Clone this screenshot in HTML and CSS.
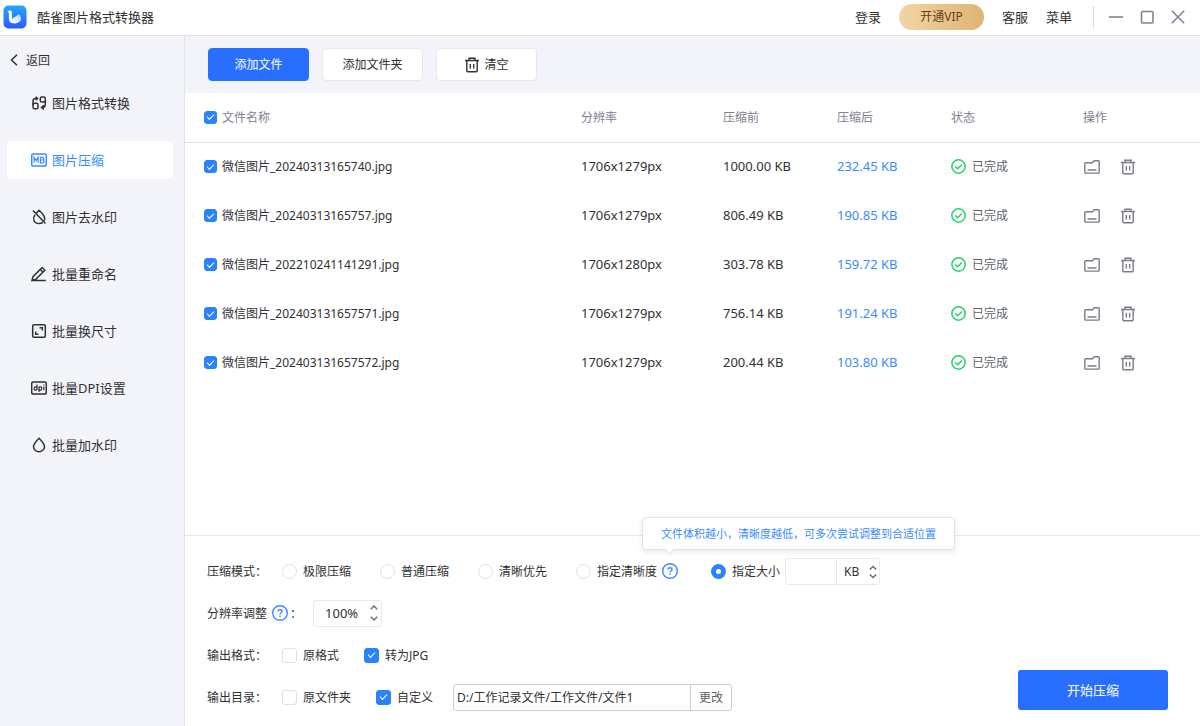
FILE: index.html
```
<!DOCTYPE html>
<html lang="zh-CN">
<head>
    <meta charset="UTF-8">
    <meta name="viewport" content="width=device-width, initial-scale=1.0">
    <title>酷雀图片格式转换器</title>
    <link rel="stylesheet" href="styles.css">
</head>
<body>

<!-- 图标 -->
<svg class="sprite" aria-hidden="true">
    <symbol id="icon-trash" viewBox="0 0 16 16">
        <path d="M1 3.5h14M5 3.2V1.2h6v2M2.800 3.500v10.300q0 1 1 1h8.400q1 0 1-1V3.500M6.300 7v4.600M9.700 7v4.600"/>
    </symbol>
    <symbol id="icon-folder" viewBox="0 0 16 16">
        <path d="M.8 13.300V4.600q0-.8.8-.8h6.800l1.800-2h4.200q.8 0 .8.800v10.700q0 .8-.8.800H1.600q-.8 0-.8-.8zM3.500 11h9"/>
    </symbol>
    <symbol id="icon-done" viewBox="0 0 14 14">
        <circle cx="7" cy="7" r="6.2"/>
        <path d="M4 7l2.2 2.1L10.1 5.2"/>
    </symbol>
    <symbol id="icon-help" viewBox="0 0 16 16">
        <circle cx="8" cy="8" r="7.3"/>
        <path d="M6 6.6Q6 4.700 8 4.700t2 1.700q0 1-1 1.600t-1 1.500M8 10.600v1.300"/>
    </symbol>
    <symbol id="icon-up" viewBox="0 0 8 5">
        <path d="M.8 4.2L4 1l3.2 3.2"/>
    </symbol>
    <symbol id="icon-down" viewBox="0 0 8 5">
        <path d="M.8.8L4 4 7.2.8"/>
    </symbol>
    <symbol id="icon-updown" viewBox="0 0 8 14">
        <path d="M.8 4.600L4 1.400l3.200 3.200M.8 9.400L4 12.600l3.200-3.200"/>
    </symbol>
</svg>

<header class="titlebar">
    <svg class="logo" viewBox="0 0 24 24" aria-hidden="true">
        <defs>
            <linearGradient id="logoBg" x1="0" y1="0" x2="0" y2="1">
                <stop offset="0" stop-color="#22a7ff"/>
                <stop offset="1" stop-color="#2b5cff"/>
            </linearGradient>
            <linearGradient id="logoWing" x1="0" y1="1" x2="1" y2="0">
                <stop offset="0" stop-color="#fff"/>
                <stop offset="1" stop-color="#b5d4ff"/>
            </linearGradient>
        </defs>
        <rect x="0.5" y="0.5" width="23" height="23" rx="5" fill="url(#logoBg)"/>
        <path d="M4.6 6.7C5.4 5 8.700 4.700 8.900 7.500V12c0 2.500 1.300 4 3.600 6.200C8 18.800 5.700 16.500 5.900 12.500V8z" fill="#fff"/>
        <path d="M9.300 14.500c.8-3.200 4.700-2.700 6.200-5.300 3.500 1.300 4.300 8.800-3.800 9.200-1.700-.7-2.700-2.100-2.400-3.900z" fill="url(#logoWing)"/>
    </svg>
    <h1>酷雀图片格式转换器</h1>
    <nav class="account">
        <a href="#">登录</a>
        <button type="button" class="vip">开通VIP</button>
        <a href="#">客服</a>
        <a href="#">菜单</a>
    </nav>
    <div class="window-controls">
        <button type="button" aria-label="最小化"><svg viewBox="0 0 16 16"><path d="M1 8h14"/></svg></button>
        <button type="button" aria-label="最大化"><svg viewBox="0 0 16 16"><rect x="2.500" y="2.500" width="11.500" height="11.500" rx="1"/></svg></button>
        <button type="button" aria-label="关闭"><svg viewBox="0 0 16 16"><path d="M1.800 1.800l12.400 12.400M14.200 1.800L1.800 14.200"/></svg></button>
    </div>
</header>

<div class="layout">
    <aside class="sidebar">
        <a class="back" href="#">
            <svg viewBox="0 0 8 12" aria-hidden="true"><path d="M7 .8L1.500 6 7 11.200"/></svg>
            返回
        </a>
        <nav class="menu">
            <a href="#">
                <svg viewBox="0 0 16 16" aria-hidden="true"><rect x="2" y="8.200" width="5" height="5.600" rx="1.600"/><rect x="9.300" y="2" width="5" height="5" rx="1.600"/><path d="M2 10V6.200Q2 3.500 4.500 3.500H6.200M4.800 1.700L6.600 3.500 4.800 5.300M14.300 5.500v3.700q0 3-2.600 3.500M12.800 10.300l-2.300 2.200 2.300 2"/></svg>
                图片格式转换
            </a>
            <a href="#" class="active">
                <svg viewBox="0 0 16 16" aria-hidden="true"><rect x=".7" y="1.900" width="14.600" height="12.200" rx="1.500"/><path class="thin" d="M3.100 10.800V5.400l2 3.200 2-3.200v5.400M9.400 10.800V5.300h1.900q1.500 0 1.500 1.300T11.300 8H9.400h2.100q1.600 0 1.600 1.400t-1.600 1.400z"/></svg>
                图片压缩
            </a>
            <a href="#">
                <svg viewBox="0 0 16 16" aria-hidden="true"><path d="M5.500 4L8 1.300C11.500 4.500 13.700 7 13.700 9.500q0 1.200-.5 2.300M4 5.700C1.500 9 2.300 14.600 8 14.600q2.300 0 3.800-1.200M2 1.500l12.500 13"/></svg>
                图片去水印
            </a>
            <a href="#">
                <svg viewBox="0 0 16 16" aria-hidden="true"><path d="M1 14.500l1-3.800L11.200 1.500l2.700 2.700L4.500 13.600zM9.300 3.500l2.600 2.600M1 14.600h13.800"/></svg>
                批量重命名
            </a>
            <a href="#">
                <svg viewBox="0 0 16 16" aria-hidden="true"><rect x="1.700" y="1.700" width="12.600" height="12.600" rx="1.300"/><path d="M8.500 4.700h2.800v2.800M7.500 11.300H4.700V8.500"/></svg>
                批量换尺寸
            </a>
            <a href="#">
                <svg viewBox="0 0 16 16" aria-hidden="true"><rect x=".7" y="1.900" width="14.600" height="12.200" rx="1.500"/><path class="thin" d="M6 4.500v5.800M6 8.500q0 1.700-1.400 1.700T3.200 8.500t1.400-1.700T6 8.500M8 6.500V12M8 8.500q0-1.700 1.400-1.700t1.400 1.700-1.400 1.700T8 8.500M12.800 6.600v3.700M12.800 4.500v.9"/></svg>
                批量DPI设置
            </a>
            <a href="#">
                <svg viewBox="0 0 16 16" aria-hidden="true"><path d="M8 1.300C4.500 4.800 2.500 7.200 2.500 9.800 2.500 12.500 5 14.700 8 14.700s5.500-2.200 5.500-4.900C13.500 7.200 11.500 4.800 8 1.300z"/></svg>
                批量加水印
            </a>
        </nav>
    </aside>

    <main class="content">
        <div class="toolbar">
            <button type="button" class="primary">添加文件</button>
            <button type="button">添加文件夹</button>
            <button type="button"><svg class="icon" aria-hidden="true"><use href="#icon-trash"/></svg>清空</button>
        </div>

        <div class="files">
            <table>
                <colgroup>
                    <col>
                    <col class="col-size">
                    <col class="col-kb">
                    <col class="col-kb">
                    <col class="col-status">
                    <col class="col-action">
                </colgroup>
                <thead>
                    <tr>
                        <th><label class="pick"><input type="checkbox" checked>文件名称</label></th>
                        <th>分辨率</th>
                        <th>压缩前</th>
                        <th>压缩后</th>
                        <th>状态</th>
                        <th>操作</th>
                    </tr>
                </thead>
                <tbody>
                    <tr>
                        <td><label class="pick"><input type="checkbox" checked>微信图片_20240313165740.jpg</label></td>
                        <td class="num">1706x1279px</td>
                        <td class="num">1000.00 KB</td>
                        <td class="num after">232.45 KB</td>
                        <td><span class="status"><svg aria-hidden="true"><use href="#icon-done"/></svg>已完成</span></td>
                        <td><div class="actions">
                            <button type="button" aria-label="打开文件夹"><svg><use href="#icon-folder"/></svg></button>
                            <button type="button" aria-label="删除"><svg><use href="#icon-trash"/></svg></button>
                        </div></td>
                    </tr>
                    <tr>
                        <td><label class="pick"><input type="checkbox" checked>微信图片_20240313165757.jpg</label></td>
                        <td class="num">1706x1279px</td>
                        <td class="num">806.49 KB</td>
                        <td class="num after">190.85 KB</td>
                        <td><span class="status"><svg aria-hidden="true"><use href="#icon-done"/></svg>已完成</span></td>
                        <td><div class="actions">
                            <button type="button" aria-label="打开文件夹"><svg><use href="#icon-folder"/></svg></button>
                            <button type="button" aria-label="删除"><svg><use href="#icon-trash"/></svg></button>
                        </div></td>
                    </tr>
                    <tr>
                        <td><label class="pick"><input type="checkbox" checked>微信图片_202210241141291.jpg</label></td>
                        <td class="num">1706x1280px</td>
                        <td class="num">303.78 KB</td>
                        <td class="num after">159.72 KB</td>
                        <td><span class="status"><svg aria-hidden="true"><use href="#icon-done"/></svg>已完成</span></td>
                        <td><div class="actions">
                            <button type="button" aria-label="打开文件夹"><svg><use href="#icon-folder"/></svg></button>
                            <button type="button" aria-label="删除"><svg><use href="#icon-trash"/></svg></button>
                        </div></td>
                    </tr>
                    <tr>
                        <td><label class="pick"><input type="checkbox" checked>微信图片_202403131657571.jpg</label></td>
                        <td class="num">1706x1279px</td>
                        <td class="num">756.14 KB</td>
                        <td class="num after">191.24 KB</td>
                        <td><span class="status"><svg aria-hidden="true"><use href="#icon-done"/></svg>已完成</span></td>
                        <td><div class="actions">
                            <button type="button" aria-label="打开文件夹"><svg><use href="#icon-folder"/></svg></button>
                            <button type="button" aria-label="删除"><svg><use href="#icon-trash"/></svg></button>
                        </div></td>
                    </tr>
                    <tr>
                        <td><label class="pick"><input type="checkbox" checked>微信图片_202403131657572.jpg</label></td>
                        <td class="num">1706x1279px</td>
                        <td class="num">200.44 KB</td>
                        <td class="num after">103.80 KB</td>
                        <td><span class="status"><svg aria-hidden="true"><use href="#icon-done"/></svg>已完成</span></td>
                        <td><div class="actions">
                            <button type="button" aria-label="打开文件夹"><svg><use href="#icon-folder"/></svg></button>
                            <button type="button" aria-label="删除"><svg><use href="#icon-trash"/></svg></button>
                        </div></td>
                    </tr>
                </tbody>
            </table>
        </div>

        <form class="settings">
            <div class="fields">
                <div class="field">
                    <span class="name">压缩模式：</span>
                    <div class="modes">
                        <label class="option"><input type="radio" name="mode">极限压缩</label>
                        <label class="option"><input type="radio" name="mode">普通压缩</label>
                        <label class="option"><input type="radio" name="mode">清晰优先</label>
                        <div class="with-help">
                            <label class="option"><input type="radio" name="mode">指定清晰度</label>
                            <span class="help">
                                <svg aria-hidden="true"><use href="#icon-help"/></svg>
                                <span class="tooltip" role="tooltip">文件体积越小，清晰度越低，可多次尝试调整到合适位置</span>
                            </span>
                        </div>
                        <div class="target">
                            <label class="option"><input type="radio" name="mode" checked>指定大小</label>
                            <div class="box">
                                <input type="text" class="amount" aria-label="大小">
                                <div class="unit">
                                    <select aria-label="单位">
                                        <option>KB</option>
                                        <option>MB</option>
                                    </select>
                                    <svg aria-hidden="true"><use href="#icon-updown"/></svg>
                                </div>
                            </div>
                        </div>
                    </div>
                </div>
                <div class="field">
                    <label class="name" for="scale">分辨率调整<span class="help"><svg aria-hidden="true"><use href="#icon-help"/></svg></span>：</label>
                    <div class="box stepper">
                        <input type="text" id="scale" value="100%">
                        <div class="steps">
                            <button type="button" aria-label="增加"><svg><use href="#icon-up"/></svg></button>
                            <button type="button" aria-label="减少"><svg><use href="#icon-down"/></svg></button>
                        </div>
                    </div>
                </div>
                <div class="field">
                    <span class="name">输出格式：</span>
                    <div class="checks">
                        <label class="option"><input type="checkbox">原格式</label>
                        <label class="option"><input type="checkbox" checked>转为JPG</label>
                    </div>
                </div>
                <div class="field">
                    <span class="name">输出目录：</span>
                    <div class="checks">
                        <label class="option"><input type="checkbox">原文件夹</label>
                        <label class="option"><input type="checkbox" checked>自定义</label>
                    </div>
                    <div class="box path">
                        <input type="text" aria-label="输出目录" value="D:/工作记录文件/工作文件/文件1">
                        <button type="button">更改</button>
                    </div>
                </div>
            </div>
            <button type="submit" class="start">开始压缩</button>
        </form>
    </main>
</div>

</body>
</html>
```
FILE: styles.css
```
/* Global styling */
* {
    box-sizing: border-box;
}

body {
    display: flex;
    flex-direction: column;
    min-height: 100vh;
    margin: 0;
    font-family: "Noto Sans", "Noto Sans CJK SC", sans-serif;
    font-size: 12px;
    line-height: 19px;
    color: #303133;
    background-color: #fff;
}

a {
    color: inherit;
    text-decoration: none;
}

button, input, select {
    margin: 0;
    padding: 0;
    border: none;
    background: none;
    font: inherit;
    color: inherit;
}

button {
    cursor: pointer;
}

svg {
    display: block;
    flex: none;
    fill: none;
    stroke: currentColor;
    stroke-width: 1.4;
}

.sprite {
    display: none;
}

/* Title bar */
.titlebar {
    display: flex;
    align-items: center;
    height: 36px;
    padding: 0 14px 2px 3px;
    border-bottom: 1px solid #e0e1e8;
    font-size: 13px;
    line-height: 18px;
}

.titlebar h1 {
    margin: 0 auto 0 10px;
    font-size: 13px;
    font-weight: 400;
}

.logo {
    width: 24px;
    height: 24px;
    stroke: none;
}

.account {
    display: flex;
    align-items: center;
    gap: 18px;
}

.vip {
    width: 85px;
    height: 26px;
    border-radius: 13px;
    background: linear-gradient(90deg, #f2d5a6, #deb472);
    font-size: 12px;
    color: #66421a;
}

.window-controls {
    display: flex;
    gap: 15px;
    margin-left: 21px;
    padding: 3px 0 3px 14px;
    border-left: 1px solid #d9dbe1;
    color: #7e8494;
}

.window-controls svg {
    width: 16px;
    height: 16px;
    stroke-width: 1.6;
}

/* Sidebar */
.layout {
    display: flex;
    flex: 1;
}

.sidebar {
    flex: none;
    width: 185px;
    padding-top: 14px;
    border-right: 1px solid #e0e3ec;
    background-color: #f3f4f9;
}

.back {
    display: flex;
    align-items: center;
    gap: 8px;
    height: 20px;
    margin-bottom: 14px;
    padding-left: 10px;
}

.back svg {
    width: 8px;
    height: 12px;
    stroke-width: 1.5;
}

.menu {
    display: flex;
    flex-direction: column;
    gap: 19px;
    padding: 0 11px 0 7px;
    line-height: 18px;
}

.menu a {
    display: flex;
    align-items: center;
    gap: 5px;
    height: 38px;
    padding-left: 24px;
    border-radius: 4px;
    font-size: 13px;
}

.menu .active {
    background-color: #fff;
    color: #3a8bff;
}

.menu svg {
    width: 16px;
    height: 16px;
    stroke-width: 1.5;
}

.menu .thin {
    stroke-width: 1.2;
}

/* Toolbar */
.content {
    display: flex;
    flex: 1;
    flex-direction: column;
    min-width: 0;
}

.toolbar {
    display: flex;
    gap: 13px;
    padding: 12px 23px;
    background-color: #f3f4f9;
}

.toolbar button {
    display: flex;
    align-items: center;
    justify-content: center;
    gap: 4px;
    width: 101px;
    height: 33px;
    border: 1px solid #e6e7ef;
    border-radius: 4px;
    background-color: #fff;
}

.toolbar .primary {
    border-color: #296fff;
    background-color: #296fff;
    color: #fff;
}

.icon {
    width: 16px;
    height: 16px;
}

/* File list */
.files {
    flex: 1;
}

table {
    width: 100%;
    border-collapse: collapse;
    table-layout: fixed;
}

.col-size {
    width: 142px;
}

.col-kb {
    width: 114px;
}

.col-status {
    width: 132px;
}

.col-action {
    width: 117px;
}

th, td {
    height: 49px;
    padding: 0;
    text-align: left;
}

th {
    border-bottom: 1px solid #dfe0e8;
    font-weight: 400;
    color: #7e8090;
}

.pick {
    display: flex;
    align-items: center;
    gap: 5px;
    padding-left: 19px;
}

.num {
    font-size: 13px;
}

.after {
    color: #3a8bff;
}

.status {
    display: flex;
    align-items: center;
    gap: 6px;
    color: #606266;
}

.status svg {
    width: 15px;
    height: 15px;
    color: #23d366;
}

.actions {
    display: flex;
    gap: 20px;
    padding-left: 1px;
    color: #7a7d88;
}

.actions svg {
    width: 16px;
    height: 16px;
}

/* Checkboxes and radios */
input[type="checkbox"], input[type="radio"] {
    display: grid;
    flex: none;
    place-content: center;
    width: 15px;
    height: 15px;
    border: 1px solid #dcdfe6;
    background-color: #fff;
    appearance: none;
}

input[type="checkbox"] {
    border-radius: 3px;
}

input[type="radio"] {
    border-radius: 50%;
}

.pick input[type="checkbox"] {
    width: 13px;
    height: 13px;
}

input[type="checkbox"]:checked {
    border-color: #2a82ff;
    background-color: #2a82ff;
}

input[type="checkbox"]:checked::before {
    content: "";
    width: 6px;
    height: 3px;
    margin-bottom: 2px;
    border: solid #fff;
    border-width: 0 0 1px 1px;
    transform: rotate(-45deg);
}

input[type="radio"]:checked {
    border: 5px solid #2a82ff;
}

/* Settings */
.settings {
    display: flex;
    align-items: flex-end;
    justify-content: space-between;
    padding: 14px 32px 8px 22px;
    border-top: 1px solid #e6e7ee;
}

.field {
    display: flex;
    align-items: center;
    height: 42px;
}

.name {
    display: flex;
    align-items: center;
    min-width: 75px;
}

.modes {
    display: flex;
    align-items: center;
    gap: 29px;
}

.option {
    display: flex;
    align-items: center;
    gap: 6px;
}

.with-help, .target {
    display: flex;
    align-items: center;
    gap: 5px;
}

.target {
    margin-left: 4px;
}

.help {
    position: relative;
    color: #3a8bff;
}

.help svg {
    width: 16px;
    height: 16px;
}

.name .help {
    margin: 0 2px 0 5px;
}

.tooltip {
    position: absolute;
    bottom: 29px;
    left: -20px;
    padding: 6px 18px;
    border: 1px solid #dfe2ee;
    border-radius: 4px;
    background-color: #fff;
    box-shadow: 0 2px 5px rgba(60, 70, 110, 0.12);
    font-size: 11px;
    white-space: nowrap;
}

.tooltip::after {
    content: "";
    position: absolute;
    bottom: -4px;
    left: 23px;
    width: 6px;
    height: 6px;
    border: solid #dfe2ee;
    border-width: 0 1px 1px 0;
    background-color: #fff;
    transform: rotate(45deg);
}

.box {
    display: flex;
    height: 27px;
    border: 1px solid #e9eaf0;
    border-radius: 3px;
}

.amount {
    width: 51px;
    border-right: 1px solid #e9eaf0;
}

.unit {
    position: relative;
}

.unit select {
    width: 42px;
    height: 100%;
    padding-left: 7px;
    appearance: none;
}

.unit svg {
    position: absolute;
    top: 6px;
    right: 2px;
    width: 8px;
    height: 14px;
    pointer-events: none;
}

.unit svg, .steps {
    color: #666b78;
}

.stepper {
    width: 69px;
    margin-left: 11px;
}

.stepper input {
    flex: 1;
    min-width: 0;
    padding-left: 11px;
    font-size: 13px;
}

.steps {
    display: flex;
    flex-direction: column;
    justify-content: center;
    gap: 6px;
    padding-right: 3px;
}

.steps svg {
    width: 8px;
    height: 5px;
}

.checks {
    display: flex;
    gap: 25px;
}

.path {
    margin-left: 20px;
    border-color: #ccced4;
}

.path input {
    width: 236px;
    padding-left: 3px;
}

.path button {
    width: 41px;
    border-left: 1px solid #ccced4;
    color: #606266;
}

.start {
    flex: none;
    width: 150px;
    height: 40px;
    margin-bottom: 8px;
    border-radius: 3px;
    background-color: #296fff;
    font-size: 13px;
    color: #fff;
}

/* Responsive design */
@media screen and (max-width: 900px) {
    .files {
        overflow-x: auto;
    }

    table {
        min-width: 840px;
    }

    .settings {
        flex-direction: column;
        align-items: flex-start;
    }

    .field {
        height: auto;
        min-height: 42px;
    }

    .modes {
        flex-wrap: wrap;
    }
}
```
